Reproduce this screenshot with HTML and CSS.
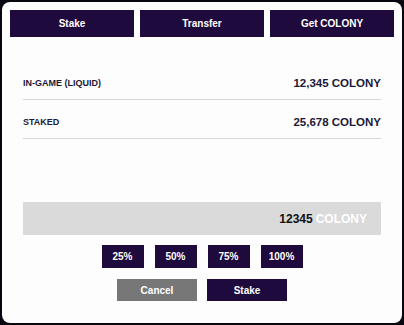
FILE: index.html
```html
<!DOCTYPE html>
<html lang="en">
<head>
  <meta charset="UTF-8">
  <meta name="viewport" content="width=device-width, initial-scale=1.0">
  <title>Stake COLONY</title>
  <link rel="stylesheet" href="styles.css">
</head>
<body>
  <div class="panel">
    <!-- Tabs -->
    <div class="tabs">
      <button class="btn tab">Stake</button>
      <button class="btn tab">Transfer</button>
      <button class="btn tab">Get COLONY</button>
    </div>

    <!-- Balances -->
    <div class="balances">
      <div class="row">
        <span class="label">IN-GAME (LIQUID)</span>
        <span class="value">12,345 COLONY</span>
      </div>
      <div class="row">
        <span class="label">STAKED</span>
        <span class="value">25,678 COLONY</span>
      </div>
    </div>

    <div class="amount">
      <span class="amount-num">12345</span>
      <span class="amount-unit">COLONY</span>
    </div>

    <div class="percents">
      <button class="btn pct">25%</button>
      <button class="btn pct">50%</button>
      <button class="btn pct">75%</button>
      <button class="btn pct">100%</button>
    </div>

    <div class="actions">
      <button class="btn action cancel">Cancel</button>
      <button class="btn action">Stake</button>
    </div>
  </div>
</body>
</html>
```

FILE: styles.css
```css
body {
  margin: 0;
  padding: 0;
  background-color: #0a0610;
  font-family: "Liberation Sans", Arial, sans-serif;
  font-weight: bold;
}

.panel {
  margin: 2px;
  height: 321px;
  box-sizing: border-box;
  background: #fdfdfd;
  border-radius: 8px;
  padding: 8px;
  display: flex;
  flex-direction: column;
}

.btn {
  border: none;
  background: #1e0a3c;
  color: #fff;
  font-family: inherit;
  font-weight: bold;
  font-size: 10px;
  padding: 0;
  cursor: pointer;
}

.tabs {
  display: flex;
  gap: 6px;
}

.tab {
  flex: 1;
  height: 27px;
}

.balances {
  margin: 24px 13px 0;
}

.row {
  display: flex;
  justify-content: space-between;
  align-items: center;
  padding: 16px 0 10px;
  line-height: 12px;
  border-bottom: 1px solid #d8d8d8;
  color: #1c1838;
}

.label {
  font-size: 9px;
}

.value {
  font-size: 11.5px;
}

.amount {
  margin: 63px 13px 0;
  height: 33px;
  background: #dadada;
  display: flex;
  justify-content: flex-end;
  align-items: center;
  gap: 3px;
  padding-right: 14px;
  font-size: 12px;
}

.amount-num {
  color: #111;
}

.amount-unit {
  color: #fff;
}

.percents {
  display: flex;
  justify-content: center;
  gap: 11px;
  margin-top: 10px;
}

.pct {
  width: 42px;
  height: 23px;
}

.actions {
  display: flex;
  justify-content: center;
  gap: 10px;
  margin-top: 11px;
}

.action {
  width: 80px;
  height: 22px;
}

.cancel {
  background: #777;
}
```
